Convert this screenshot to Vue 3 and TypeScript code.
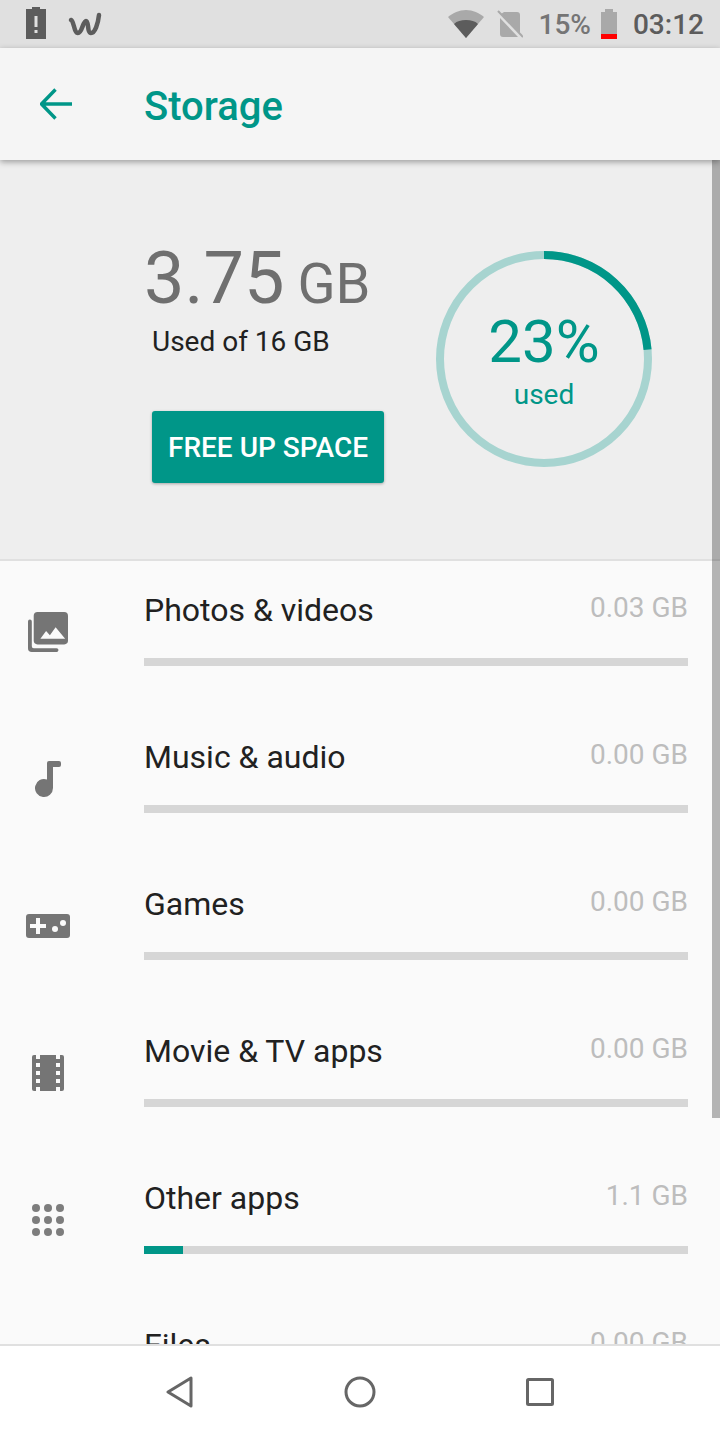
<script setup lang="ts">
interface Row { title: string; size: string; pct: number; icon: string }
const rows: Row[] = [
  { title: 'Photos & videos', size: '0.03 GB', pct: 0, icon: 'photos' },
  { title: 'Music & audio', size: '0.00 GB', pct: 0, icon: 'music' },
  { title: 'Games', size: '0.00 GB', pct: 0, icon: 'games' },
  { title: 'Movie & TV apps', size: '0.00 GB', pct: 0, icon: 'movie' },
  { title: 'Other apps', size: '1.1 GB', pct: 7.2, icon: 'apps' },
  { title: 'Files', size: '0.00 GB', pct: 0, icon: 'files' },
]
const r = 104
const circ = 2 * Math.PI * r
const arc = `${circ * 0.235} ${circ}`
const dots = [0, 1, 2].flatMap((y) => [0, 1, 2].map((x) => ({ cx: 4 + x * 12, cy: 4 + y * 12 })))
</script>

<template>
  <div class="screen">
    <div class="status">
      <div class="status-left">
        <svg width="20" height="32" viewBox="0 0 20 32"><path fill="#5c5c5c" d="M6 0h8v2h6v30H0V2h6z" /><rect x="8.500" y="9" width="3" height="11" fill="#e0e0e0" /><rect x="8.500" y="23" width="3" height="3" fill="#e0e0e0" /></svg>
        <svg width="34" height="24" viewBox="0 0 34 24"><path fill="none" stroke="#5c5c5c" stroke-width="4.500" stroke-linecap="round" d="M3 8c3 1 3 13 7 13s5-12 8-12 1 12 5 12 7-9 8-18" /></svg>
      </div>
      <div class="status-right">
        <svg class="wifi" width="36" height="28" viewBox="0 0 36 28"><path fill="#a9a9a9" d="M18 28 0 7C5 3 11 0 18 0s13 3 18 7z" /><path fill="#5c5c5c" d="M18 28 6 14c3-3 7-4 12-4s9 1 12 4z" /></svg>
        <svg class="sim" width="26" height="28" viewBox="0 0 26 28"><path fill="#a9a9a9" d="M7 2h13a3 3 0 0 1 3 3v18L4 4zM3 8l18 19H6a3 3 0 0 1-3-3z" /><path stroke="#a9a9a9" stroke-width="2" d="M1 1l25 26" /></svg>
        <span class="pct">15%</span>
        <svg class="batt" width="16" height="30" viewBox="0 0 16 30"><path fill="#a9a9a9" d="M4 0h8v3h4v27H0V3h4z" /><rect y="25" width="16" height="5" fill="#f00" /></svg>
        <span class="time">03:12</span>
      </div>
    </div>

    <header class="appbar">
      <button class="back" aria-label="Back">
        <svg width="32" height="32" viewBox="0 0 32 32"><path fill="none" stroke="#009688" stroke-width="3.400" d="M32 16H2M15.500 1.500 1.500 16l14 14.500" /></svg>
      </button>
      <h1 class="title">Storage</h1>
    </header>

    <main class="scroll">
      <section class="hero">
        <div class="summary">
          <div class="amount"><span class="big">3.75</span><span class="unit">GB</span></div>
          <div class="of">Used of 16 GB</div>
          <button class="free">FREE UP SPACE</button>
        </div>
        <div class="ring">
          <svg width="216" height="216" viewBox="0 0 216 216">
            <circle cx="108" cy="108" :r="r" fill="none" stroke="#a7d4d0" stroke-width="8" />
            <circle cx="108" cy="108" :r="r" fill="none" stroke="#009688" stroke-width="8" :stroke-dasharray="arc" transform="rotate(-90 108 108)" />
          </svg>
          <div class="ring-text">
            <div class="ring-pct">23%</div>
            <div class="ring-used">used</div>
          </div>
        </div>
      </section>

      <section class="list">
        <div v-for="row in rows" :key="row.title" class="row">
          <div class="icon">
            <svg v-if="row.icon === 'photos'" width="40" height="40" viewBox="0 0 42 42" fill="#757575">
              <path d="M10 0h28a4 4 0 0 1 4 4v26a4 4 0 0 1-4 4H10a4 4 0 0 1-4-4V4a4 4 0 0 1 4-4z" />
              <path d="M0 10a2 2 0 0 1 4 0v26a2 2 0 0 0 2 2h24a2 2 0 0 1 0 4H4a4 4 0 0 1-4-4z" />
              <path fill="#fafafa" d="M13 28l6-8 4 4.500 6-8.500 10 12z" />
            </svg>
            <svg v-else-if="row.icon === 'music'" width="26" height="36" viewBox="0 0 26 36" fill="#757575">
              <path d="M12 2a2 2 0 0 1 2-2h10a2 2 0 0 1 2 2v2a2 2 0 0 1-2 2H18v21a9 9 0 1 1-6-8.500z" />
            </svg>
            <svg v-else-if="row.icon === 'games'" width="44" height="24" viewBox="0 0 44 24">
              <rect width="44" height="24" rx="3" fill="#757575" />
              <path fill="#fafafa" d="M10 4h4v6h6v4h-6v6h-4v-6H4v-4h6z" />
              <circle cx="29" cy="15" r="3" fill="#fafafa" />
              <circle cx="37" cy="9" r="3" fill="#fafafa" />
            </svg>
            <svg v-else-if="row.icon === 'movie'" width="32" height="36" viewBox="0 0 32 36">
              <rect width="32" height="36" rx="2" fill="#757575" />
              <g fill="#fafafa">
                <rect x="4" width="4" height="4" /><rect x="24" width="4" height="4" />
                <rect x="4" y="8" width="4" height="4" /><rect x="24" y="8" width="4" height="4" />
                <rect x="4" y="16" width="4" height="4" /><rect x="24" y="16" width="4" height="4" />
                <rect x="4" y="24" width="4" height="4" /><rect x="24" y="24" width="4" height="4" />
                <rect x="4" y="32" width="4" height="4" /><rect x="24" y="32" width="4" height="4" />
              </g>
            </svg>
            <svg v-else-if="row.icon === 'apps'" width="32" height="32" viewBox="0 0 32 32" fill="#7d7d7d">
              <circle v-for="(d, i) in dots" :key="i" :cx="d.cx" :cy="d.cy" r="4" />
            </svg>
            <svg v-else width="32" height="40" viewBox="0 0 32 40" fill="#757575"><path d="M4 0h16l12 12v24a4 4 0 0 1-4 4H4a4 4 0 0 1-4-4V4a4 4 0 0 1 4-4z" /></svg>
          </div>
          <div class="body">
            <div class="line">
              <span class="name">{{ row.title }}</span>
              <span class="size">{{ row.size }}</span>
            </div>
            <div class="bar"><div class="fill" :style="{ width: row.pct + '%' }"></div></div>
          </div>
        </div>
      </section>
      <div class="thumb"></div>
    </main>

    <nav class="nav">
      <svg width="28" height="32" viewBox="0 0 28 32"><path fill="none" stroke="#666" stroke-width="3" stroke-linejoin="round" d="M25 2v28L2 16z" /></svg>
      <svg width="32" height="32" viewBox="0 0 32 32"><circle cx="16" cy="16" r="14" fill="none" stroke="#666" stroke-width="3" /></svg>
      <svg width="28" height="28" viewBox="0 0 28 28"><rect x="1.500" y="1.500" width="25" height="25" rx="1" fill="none" stroke="#666" stroke-width="3" /></svg>
    </nav>
  </div>
</template>

<style scoped>
.screen {
  width: 720px;
  height: 1440px;
  display: flex;
  flex-direction: column;
  overflow: hidden;
  font-family: Roboto, "Liberation Sans", sans-serif;
  background: #fafafa;
}
.status {
  height: 48px;
  flex: none;
  background: #e0e0e0;
  display: flex;
  align-items: center;
  justify-content: space-between;
  padding: 0 16px 0 26px;
  box-sizing: border-box;
}
.status-left, .status-right { display: flex; align-items: center; }
.status-left { gap: 22px; }
.status-left svg:first-child { margin-top: -2px; }
.pct { font-size: 28px; font-weight: 500; color: #757575; margin-left: 16px; }
.time { font-size: 28px; color: #5c5c5c; font-weight: 500; margin-left: 16px; }
.wifi { margin-right: 7px; }
.sim { margin-left: 6px; }
.batt { margin-left: 10px; }
.appbar {
  height: 112px;
  flex: none;
  background: #f5f5f5;
  display: flex;
  align-items: center;
  box-shadow: 0 2px 6px rgba(0, 0, 0, 0.35);
  position: relative;
  z-index: 2;
}
.back {
  width: 144px;
  flex: none;
  border: 0;
  background: none;
  padding: 0 0 0 40px;
  display: flex;
  text-align: left;
}
.title { margin: 6px 0 0; font-size: 40px; line-height: 1; font-weight: 500; color: #009688; }
.scroll { flex: 1; overflow: hidden; position: relative; min-height: 0; }
.hero {
  height: 401px;
  box-sizing: border-box;
  background: #eeeeee;
  border-bottom: 2px solid #e0e0e0;
  display: flex;
  justify-content: space-between;
  padding: 91px 68px 0 144px;
}
.summary { display: flex; flex-direction: column; align-items: flex-start; }
.amount { display: flex; align-items: baseline; gap: 13px; color: #6f6f6f; height: 56px; line-height: 56px; }
.big { font-size: 72px; font-weight: 400; }
.unit { font-size: 56px; font-weight: 400; }
.of { font-size: 28px; color: #212121; margin: 19px 0 0 8px; line-height: 32px; }
.free {
  margin: 53px 0 0 8px;
  width: 232px;
  height: 72px;
  border: 0;
  border-radius: 3px;
  background: #009688;
  color: #fff;
  font: 500 28px Roboto, sans-serif;
  padding: 1px 0 0;
  box-shadow: 0 1px 3px rgba(0, 0, 0, 0.3);
}
.ring { position: relative; width: 216px; height: 216px; }
.ring svg { display: block; }
.ring-text {
  position: absolute;
  inset: 0;
  display: flex;
  flex-direction: column;
  align-items: center;
  justify-content: center;
  color: #009688;
}
.ring-pct { font-size: 60px; font-weight: 400; line-height: 64px; margin-top: 3px; }
.ring-used { font-size: 28px; line-height: 34px; margin-top: 4px; }
.row { height: 147px; display: flex; }
.icon { width: 144px; flex: none; display: flex; justify-content: center; align-items: center; padding: 0 48px 5px 0; box-sizing: border-box; }
.body { flex: 1; padding: 27px 32px 0 0; }
.line { display: flex; justify-content: space-between; align-items: flex-start; }
.name { font-size: 32px; line-height: 44px; color: #212121; }
.size { font-size: 28px; line-height: 40px; color: #bdbdbd; }
.bar { height: 8px; margin-top: 26px; background: #d6d6d6; }
.fill { height: 100%; background: #009688; }
.thumb {
  position: absolute;
  top: 0;
  right: 0;
  width: 8px;
  height: 958px;
  background: rgba(0, 0, 0, 0.28);
}
.nav {
  height: 96px;
  flex: none;
  background: #fff;
  border-top: 2px solid #e0e0e0;
  display: flex;
  align-items: center;
  justify-content: center;
  padding-bottom: 2px;
  box-sizing: border-box;
}
.nav svg { width: 180px; }
</style>
